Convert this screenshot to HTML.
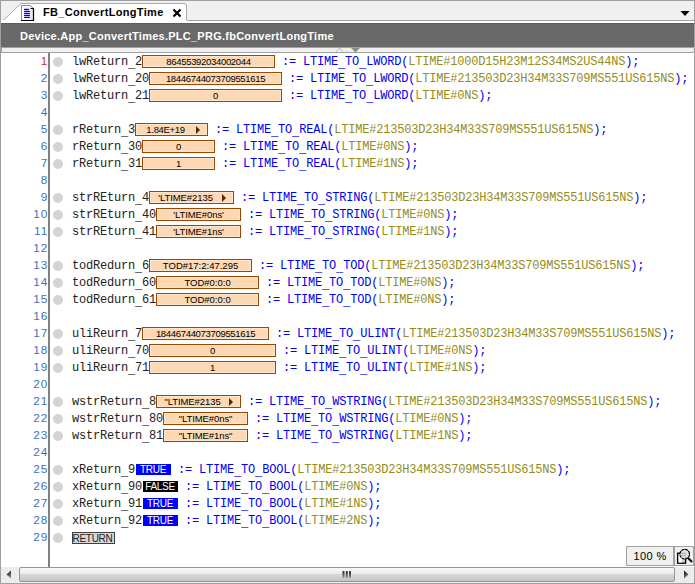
<!DOCTYPE html>
<html><head><meta charset="utf-8">
<style>
*{margin:0;padding:0;box-sizing:border-box}
html,body{width:695px;height:584px;overflow:hidden;background:#fff;position:relative}
.a{position:absolute}
#frame{left:0;top:0;width:695px;height:584px;border:1px solid #a0a0a0;border-bottom-color:#a0a0a0}
#strip{left:1px;top:1px;width:693px;height:19px;background:#f0f0f0}
#stripline{left:187px;top:20px;width:507px;height:1px;background:#a0a0a0}
#white1{left:1px;top:21px;width:693px;height:2px;background:#fff}
#hdr{left:1px;top:23px;width:693px;height:24px;background:#696969;border-top:1px solid #5c5c5c}
#hdrtxt{left:20px;top:29px;font:bold 11px "Liberation Sans",sans-serif;letter-spacing:0.25px;color:#fff;white-space:pre;line-height:14px}
#bar{left:1px;top:47px;width:693px;height:6px;background:#f0f0f0;border:1px solid #a0a0a0;border-right-color:#d8d8d8}
#tabtxt{left:43px;top:5px;font:bold 11px "Liberation Sans",sans-serif;letter-spacing:0.33px;color:#000;white-space:pre;line-height:14px}
#code{left:1px;top:53px;width:693px;height:514px;background:#fff}
#gutter{left:48px;top:53px;width:2px;height:514px;background:#808080}
.ln{position:absolute;left:0;width:48.5px;text-align:right;font:10px "Liberation Sans",sans-serif;letter-spacing:0.9px;transform:scaleX(1.18);transform-origin:100% 50%;color:#3c72c0;line-height:17px;height:17px;margin-top:0px}
.bp{position:absolute;left:53px;width:10px;height:10px;border-radius:50%;background:#d4d4d4}
.cl{position:absolute;left:72px;margin-top:1px;height:17px;font:12px "Liberation Mono",monospace;letter-spacing:-0.2px;line-height:17px;white-space:pre;color:#222}
.ln.r{color:#d02a40}
.rb{display:inline-block;vertical-align:top;margin-top:2px;height:12px;width:43px;border:1px solid #404040;background:#d8d8d8;font:10px "Liberation Sans",sans-serif;letter-spacing:-0.3px;line-height:11px;overflow:hidden;text-align:center;text-indent:-2px;color:#202020}
.u{position:relative;top:2px}
.k{color:#0000f0}
.l{color:#948c1c}
.vb{display:inline-block;vertical-align:top;position:relative;height:13px;margin-top:1px;background:#fdd8b4;border:1px solid #9c4600;box-shadow:inset 0 0 0 1px #fee5cc;font:9.5px "Liberation Sans",sans-serif;letter-spacing:-0.6px;line-height:11px;text-align:center;color:#000}
.vb.arr{padding-right:12px}
.vb.arr:after{content:"";position:absolute;right:7.5px;top:2px;border-left:4.5px solid #5a2800;border-top:4px solid transparent;border-bottom:4px solid transparent}
.bb{display:inline-block;vertical-align:top;height:11px;margin-top:2px;margin-left:1px;width:35px;background:#0000ff;color:#fff;font:10px "Liberation Sans",sans-serif;letter-spacing:-0.3px;line-height:12px;overflow:hidden;text-align:center;text-indent:-1px}
.bb.f{background:#000}
#scroll{left:1px;top:567px;width:693px;height:16px;background:#ececec}
#zoombox{left:626px;top:546px;width:48px;height:20px;background:#f0f0f0;border:1px solid #a0a0a0;font:11px "Liberation Sans",sans-serif;letter-spacing:0.4px;line-height:18px;text-align:center;color:#000}
#magbox{left:674px;top:546px;width:20px;height:20px;background:#f0f0f0;border:1px solid #a0a0a0}
#thumb{left:19px;top:567px;width:656px;height:15px;border:1px solid #959595;border-radius:2px;background:linear-gradient(#f8f8f8,#ececec 42%,#d8d8da 50%,#c4c4c8)}
</style></head><body>
<div class="a" id="frame"></div>
<div class="a" id="strip"></div>
<div class="a" id="stripline"></div>
<!-- tab -->
<svg class="a" style="left:0;top:0" width="200" height="23">
  <path d="M1 20.5 H3 L21 3.5 H184 Q186.5 3.5 186.5 6 V20.5" fill="#fff" stroke="#a8a8a8" stroke-width="1"/>
  <rect x="1" y="20" width="186" height="3" fill="#fff"/>
  <!-- doc icon -->
  <defs><linearGradient id="dg" x1="0" y1="0" x2="1" y2="0"><stop offset="0" stop-color="#fff"/><stop offset="0.6" stop-color="#f6f6f6"/><stop offset="1" stop-color="#dcdcdc"/></linearGradient></defs>
  <path d="M21.5 5.5 H30.5 L33.5 8.5 V20.5 H21.5 Z" fill="url(#dg)"/>
  <path d="M21.5 20.5 V5.5 H30.5 L33.5 8.5" fill="none" stroke="#8c8c8c" stroke-width="1"/>
  <path d="M30.5 8.5 H33.5 V20.5 H21" fill="none" stroke="#000" stroke-width="1.2"/>
  <g fill="#0000ff"><rect x="24" y="8.8" width="5" height="1.2" rx="0.5"/><rect x="24" y="10.8" width="6" height="1.2" rx="0.5"/><rect x="24" y="12.8" width="6" height="1.2" rx="0.5"/><rect x="24" y="14.8" width="6" height="1.2" rx="0.5"/><rect x="24" y="16.8" width="6" height="1.2" rx="0.5"/></g>
  <!-- close X -->
  <path d="M173.5 9.5 L180.5 16.5 M180.5 9.5 L173.5 16.5" stroke="#000" stroke-width="2.2"/>
</svg>
<div class="a" id="tabtxt">FB_ConvertLongTime</div>
<!-- dropdown arrow -->
<svg class="a" style="left:679px;top:9.5px" width="12" height="8"><path d="M1.5 1 H10.5 L6 6 Z" fill="#000"/></svg>
<div class="a" id="white1"></div>
<div class="a" id="hdr"></div>
<div class="a" id="hdrtxt">Device.App_ConvertTimes.PLC_PRG.fbConvertLongTime</div>
<div class="a" id="bar"></div>
<svg class="a" style="left:334px;top:47px" width="30" height="6">
  <path d="M2 4.8 L5.5 1.2 L9 4.8" fill="none" stroke="#a8a8a8" stroke-width="0.9"/>
  <path d="M17 1 H26 L21.5 5.5 Z" fill="#8c8c8c"/>
</svg>
<div class="a" id="code"></div>
<div class="a" id="gutter"></div>
<div class="a" id="lines" style="left:0;top:53px;width:695px;height:514px">
<div class="ln r" style="top:0px">1</div>
<div class="bp" style="top:4px"></div>
<div class="cl" style="top:0px">lwReturn<span class="u">_</span>2<span class="vb" style="width:133px;letter-spacing:-0.32px">86455392034002044</span> <span class="k">:= LTIME<span class="u">_</span>TO<span class="u">_</span>LWORD(</span><span class="l">LTIME#1000D15H23M12S34MS2US44NS</span><span class="k">);</span></div>
<div class="ln" style="top:17px">2</div>
<div class="bp" style="top:21px"></div>
<div class="cl" style="top:17px">lwReturn<span class="u">_</span>20<span class="vb" style="width:133px;letter-spacing:-0.32px">18446744073709551615</span> <span class="k">:= LTIME<span class="u">_</span>TO<span class="u">_</span>LWORD(</span><span class="l">LTIME#213503D23H34M33S709MS551US615NS</span><span class="k">);</span></div>
<div class="ln" style="top:34px">3</div>
<div class="bp" style="top:38px"></div>
<div class="cl" style="top:34px">lwReturn<span class="u">_</span>21<span class="vb" style="width:133px;letter-spacing:-0.32px">0</span> <span class="k">:= LTIME<span class="u">_</span>TO<span class="u">_</span>LWORD(</span><span class="l">LTIME#0NS</span><span class="k">);</span></div>
<div class="ln" style="top:51px">4</div>
<div class="ln" style="top:68px">5</div>
<div class="bp" style="top:72px"></div>
<div class="cl" style="top:68px">rReturn<span class="u">_</span>3<span class="vb arr" style="width:73px;letter-spacing:-0.32px">1.84E+19</span> <span class="k">:= LTIME<span class="u">_</span>TO<span class="u">_</span>REAL(</span><span class="l">LTIME#213503D23H34M33S709MS551US615NS</span><span class="k">);</span></div>
<div class="ln" style="top:85px">6</div>
<div class="bp" style="top:89px"></div>
<div class="cl" style="top:85px">rReturn<span class="u">_</span>30<span class="vb" style="width:73px;letter-spacing:-0.32px">0</span> <span class="k">:= LTIME<span class="u">_</span>TO<span class="u">_</span>REAL(</span><span class="l">LTIME#0NS</span><span class="k">);</span></div>
<div class="ln" style="top:102px">7</div>
<div class="bp" style="top:106px"></div>
<div class="cl" style="top:102px">rReturn<span class="u">_</span>31<span class="vb" style="width:73px;letter-spacing:-0.32px">1</span> <span class="k">:= LTIME<span class="u">_</span>TO<span class="u">_</span>REAL(</span><span class="l">LTIME#1NS</span><span class="k">);</span></div>
<div class="ln" style="top:119px">8</div>
<div class="ln" style="top:136px">9</div>
<div class="bp" style="top:140px"></div>
<div class="cl" style="top:136px">strREturn<span class="u">_</span>4<span class="vb arr" style="width:85px;letter-spacing:-0.08px">&#x27;LTIME#2135</span> <span class="k">:= LTIME<span class="u">_</span>TO<span class="u">_</span>STRING(</span><span class="l">LTIME#213503D23H34M33S709MS551US615NS</span><span class="k">);</span></div>
<div class="ln" style="top:153px">10</div>
<div class="bp" style="top:157px"></div>
<div class="cl" style="top:153px">strREturn<span class="u">_</span>40<span class="vb" style="width:85px;letter-spacing:-0.08px">&#x27;LTIME#0ns&#x27;</span> <span class="k">:= LTIME<span class="u">_</span>TO<span class="u">_</span>STRING(</span><span class="l">LTIME#0NS</span><span class="k">);</span></div>
<div class="ln" style="top:170px">11</div>
<div class="bp" style="top:174px"></div>
<div class="cl" style="top:170px">strREturn<span class="u">_</span>41<span class="vb" style="width:85px;letter-spacing:-0.08px">&#x27;LTIME#1ns&#x27;</span> <span class="k">:= LTIME<span class="u">_</span>TO<span class="u">_</span>STRING(</span><span class="l">LTIME#1NS</span><span class="k">);</span></div>
<div class="ln" style="top:187px">12</div>
<div class="ln" style="top:204px">13</div>
<div class="bp" style="top:208px"></div>
<div class="cl" style="top:204px">todRedurn<span class="u">_</span>6<span class="vb" style="width:103px;letter-spacing:0px">TOD#17:2:47.295</span> <span class="k">:= LTIME<span class="u">_</span>TO<span class="u">_</span>TOD(</span><span class="l">LTIME#213503D23H34M33S709MS551US615NS</span><span class="k">);</span></div>
<div class="ln" style="top:221px">14</div>
<div class="bp" style="top:225px"></div>
<div class="cl" style="top:221px">todRedurn<span class="u">_</span>60<span class="vb" style="width:103px;letter-spacing:0px">TOD#0:0:0</span> <span class="k">:= LTIME<span class="u">_</span>TO<span class="u">_</span>TOD(</span><span class="l">LTIME#0NS</span><span class="k">);</span></div>
<div class="ln" style="top:238px">15</div>
<div class="bp" style="top:242px"></div>
<div class="cl" style="top:238px">todRedurn<span class="u">_</span>61<span class="vb" style="width:103px;letter-spacing:0px">TOD#0:0:0</span> <span class="k">:= LTIME<span class="u">_</span>TO<span class="u">_</span>TOD(</span><span class="l">LTIME#0NS</span><span class="k">);</span></div>
<div class="ln" style="top:255px">16</div>
<div class="ln" style="top:272px">17</div>
<div class="bp" style="top:276px"></div>
<div class="cl" style="top:272px">uliReurn<span class="u">_</span>7<span class="vb" style="width:127px;letter-spacing:-0.32px">18446744073709551615</span> <span class="k">:= LTIME<span class="u">_</span>TO<span class="u">_</span>ULINT(</span><span class="l">LTIME#213503D23H34M33S709MS551US615NS</span><span class="k">);</span></div>
<div class="ln" style="top:289px">18</div>
<div class="bp" style="top:293px"></div>
<div class="cl" style="top:289px">uliReurn<span class="u">_</span>70<span class="vb" style="width:127px;letter-spacing:-0.32px">0</span> <span class="k">:= LTIME<span class="u">_</span>TO<span class="u">_</span>ULINT(</span><span class="l">LTIME#0NS</span><span class="k">);</span></div>
<div class="ln" style="top:306px">19</div>
<div class="bp" style="top:310px"></div>
<div class="cl" style="top:306px">uliReurn<span class="u">_</span>71<span class="vb" style="width:127px;letter-spacing:-0.32px">1</span> <span class="k">:= LTIME<span class="u">_</span>TO<span class="u">_</span>ULINT(</span><span class="l">LTIME#1NS</span><span class="k">);</span></div>
<div class="ln" style="top:323px">20</div>
<div class="ln" style="top:340px">21</div>
<div class="bp" style="top:344px"></div>
<div class="cl" style="top:340px">wstrReturn<span class="u">_</span>8<span class="vb arr" style="width:85px;letter-spacing:-0.08px">&quot;LTIME#2135</span> <span class="k">:= LTIME<span class="u">_</span>TO<span class="u">_</span>WSTRING(</span><span class="l">LTIME#213503D23H34M33S709MS551US615NS</span><span class="k">);</span></div>
<div class="ln" style="top:357px">22</div>
<div class="bp" style="top:361px"></div>
<div class="cl" style="top:357px">wstrReturn<span class="u">_</span>80<span class="vb" style="width:85px;letter-spacing:-0.08px">&quot;LTIME#0ns&quot;</span> <span class="k">:= LTIME<span class="u">_</span>TO<span class="u">_</span>WSTRING(</span><span class="l">LTIME#0NS</span><span class="k">);</span></div>
<div class="ln" style="top:374px">23</div>
<div class="bp" style="top:378px"></div>
<div class="cl" style="top:374px">wstrReturn<span class="u">_</span>81<span class="vb" style="width:85px;letter-spacing:-0.08px">&quot;LTIME#1ns&quot;</span> <span class="k">:= LTIME<span class="u">_</span>TO<span class="u">_</span>WSTRING(</span><span class="l">LTIME#1NS</span><span class="k">);</span></div>
<div class="ln" style="top:391px">24</div>
<div class="ln" style="top:408px">25</div>
<div class="bp" style="top:412px"></div>
<div class="cl" style="top:408px">xReturn<span class="u">_</span>9<span class="bb">TRUE</span> <span class="k">:= LTIME<span class="u">_</span>TO<span class="u">_</span>BOOL(</span><span class="l">LTIME#213503D23H34M33S709MS551US615NS</span><span class="k">);</span></div>
<div class="ln" style="top:425px">26</div>
<div class="bp" style="top:429px"></div>
<div class="cl" style="top:425px">xReturn<span class="u">_</span>90<span class="bb f">FALSE</span> <span class="k">:= LTIME<span class="u">_</span>TO<span class="u">_</span>BOOL(</span><span class="l">LTIME#0NS</span><span class="k">);</span></div>
<div class="ln" style="top:442px">27</div>
<div class="bp" style="top:446px"></div>
<div class="cl" style="top:442px">xReturn<span class="u">_</span>91<span class="bb">TRUE</span> <span class="k">:= LTIME<span class="u">_</span>TO<span class="u">_</span>BOOL(</span><span class="l">LTIME#1NS</span><span class="k">);</span></div>
<div class="ln" style="top:459px">28</div>
<div class="bp" style="top:463px"></div>
<div class="cl" style="top:459px">xReturn<span class="u">_</span>92<span class="bb">TRUE</span> <span class="k">:= LTIME<span class="u">_</span>TO<span class="u">_</span>BOOL(</span><span class="l">LTIME#2NS</span><span class="k">);</span></div>
<div class="ln" style="top:476px">29</div>
<div class="bp" style="top:480px"></div>
<div class="cl" style="top:476px"><span class="rb">RETURN</span></div>
</div>
<div class="a" id="scroll"></div>
<div class="a" id="thumb"></div>
<svg class="a" style="left:0;top:567px" width="695" height="17">
  <defs><linearGradient id="ag" x1="0" y1="0" x2="0.3" y2="1"><stop offset="0" stop-color="#000"/><stop offset="1" stop-color="#888"/></linearGradient></defs><path d="M11 3.5 L6.5 7.5 L11 11.5 Z" fill="url(#ag)"/>
  <path d="M684 3.5 L688.5 7.5 L684 11.5 Z" fill="url(#ag)"/>
  <defs><linearGradient id="gg" x1="0" y1="0" x2="0" y2="1"><stop offset="0" stop-color="#1a1a1a"/><stop offset="1" stop-color="#9a9a9a"/></linearGradient></defs><g fill="url(#gg)"><rect x="342.5" y="4" width="2" height="7" rx="0.8"/><rect x="345.8" y="4" width="2" height="7" rx="0.8"/><rect x="349" y="4" width="2" height="7" rx="0.8"/></g>
</svg>
<div class="a" id="zoombox">100 %</div>
<div class="a" id="magbox"></div>
<svg class="a" style="left:674px;top:546px" width="20" height="20">
  <rect x="3.6" y="7.2" width="8" height="10" fill="#d0d0d0" stroke="#000" stroke-width="1.3"/>
  <rect x="4.8" y="8.4" width="3" height="8" fill="#fff"/>
  <circle cx="10.7" cy="8.2" r="4.8" fill="#e4e4e4" fill-opacity="0.85" stroke="#000" stroke-width="1.2" stroke-dasharray="3.2 0.5"/>
  <path d="M6.5 7.5 H10.5 M6.5 9.5 H11" stroke="#30d8e8" stroke-width="0.9"/>
  <path d="M13.8 11.8 L18 16" stroke="#000" stroke-width="2"/>
</svg>
</body></html>
